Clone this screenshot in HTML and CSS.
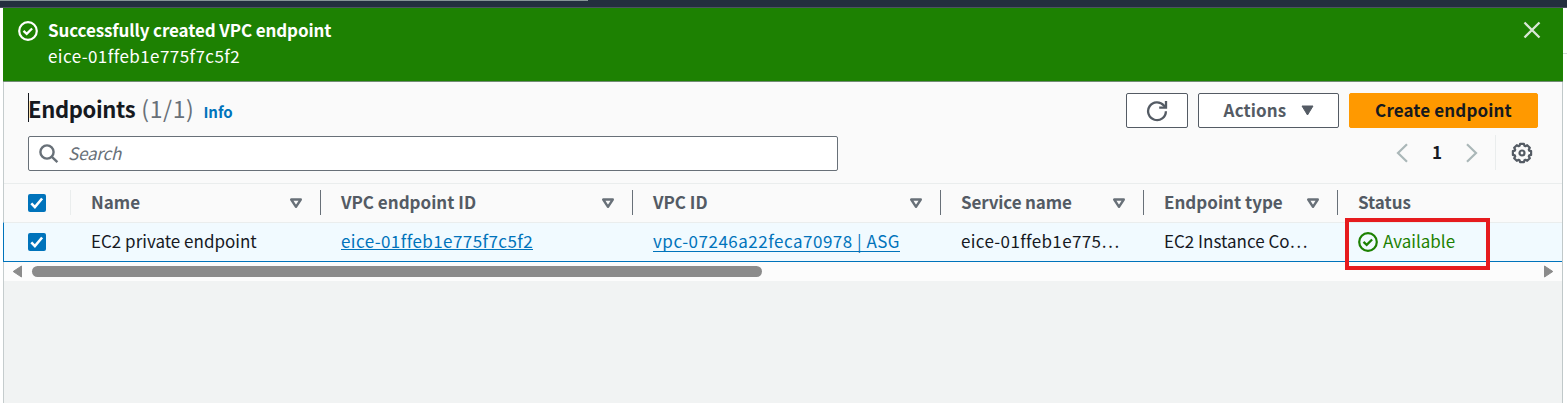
FILE: index.html
```html
<!DOCTYPE html>
<html lang="en">
<head>
<meta charset="utf-8">
<title>Endpoints</title>
<link rel="stylesheet" href="styles.css">
</head>
<body>
<svg class="defs" aria-hidden="true">
  <symbol id="sort" viewBox="0 0 14 12"><path d="M2.200 2.500h9.600L7 9.800z" fill="none" stroke="#687078" stroke-width="2.400" stroke-linejoin="round"/></symbol>
  <symbol id="ok" viewBox="0 0 20 20"><circle cx="10" cy="10" r="8.8" fill="none" stroke="currentColor" stroke-width="2.2"/><path d="M5.5 9.8l3.2 3 5.4-5.3" fill="none" stroke="currentColor" stroke-width="2.3"/></symbol>
  <symbol id="check" viewBox="0 0 18 18"><path d="M3.3 9.3l3.6 3.8 7.2-8.6" fill="none" stroke="#fff" stroke-width="2.6"/></symbol>
</svg>
<div class="topbar"><div class="topbar-edge"></div></div>
<div class="page">
  <main class="main">
    <section class="flash">
      <svg class="flash-icon" width="20" height="20"><use href="#ok"/></svg>
      <div class="flash-text">
        <div class="flash-title">Successfully created VPC endpoint</div>
        <div class="flash-body"><span class="resource-id">eice-01ffeb1e775f7c5f2</span></div>
      </div>
      <svg class="close" width="18" height="18" viewBox="0 0 18 18"><path d="M1.5 1.5l15 15M16.5 1.5l-15 15" stroke="#d9e7d5" stroke-width="2.3"/></svg>
    </section>
    <section class="panel">
      <div class="toolbar">
        <div class="heading">
          <h1 class="title">Endpoints</h1>
          <span class="count">(1/1)</span>
          <a class="info">Info</a>
        </div>
        <div class="actions">
          <button class="btn refresh"><svg width="22" height="22" viewBox="0 0 22 22" fill="none" stroke="#545b64" stroke-width="2.3"><path d="M19.9 11.2A8.9 8.9 0 1 1 17.9 5.6L19 7"/><path d="M20 1v6.7h-6.8"/></svg></button>
          <button class="btn menu"><span class="label">Actions</span><svg width="13" height="11" viewBox="0 0 13 11"><path d="M1 1h11L6.5 10z" fill="#545b64" stroke="#545b64" stroke-linejoin="round"/></svg></button>
          <button class="btn primary"><span class="label">Create endpoint</span></button>
        </div>
      </div>
      <div class="filters">
        <div class="search">
          <svg width="20" height="20" viewBox="0 0 20 20" fill="none" stroke="#687078" stroke-width="2.4"><circle cx="8" cy="8" r="6.6"/><path d="M12.6 12.6l5.8 5.6"/></svg>
          <span class="label">Search</span>
        </div>
        <div class="pager">
          <svg width="12" height="20" viewBox="0 0 12 20" fill="none" stroke="#aab7b8" stroke-width="2.2"><path d="M11 1.2L2 10l9 8.8"/></svg>
          <span class="page-no label">1</span>
          <svg width="12" height="20" viewBox="0 0 12 20" fill="none" stroke="#aab7b8" stroke-width="2.2"><path d="M1 1.2L10 10l-9 8.8"/></svg>
          <div class="prefs">
            <svg width="22" height="22" viewBox="0 0 22 22" fill="none" stroke="#545b64" stroke-width="2.2" stroke-linejoin="round"><path d="M9.1 1.9h3.8l.5 1.9 1 .4 1.8-1 2.6 2.6-1 1.8.4 1 1.9.5v3.8l-1.9.5-.4 1 1 1.8-2.6 2.6-1.8-1-1 .4-.5 1.9H9.1l-.5-1.9-1-.4-1.8 1-2.6-2.6 1-1.8-.4-1-1.9-.5V9.1l1.9-.5.4-1-1-1.8 2.6-2.6 1.8 1 1-.4z"/><circle cx="11" cy="11" r="2.5"/></svg>
          </div>
        </div>
      </div>
      <div class="grid head">
        <div class="cell pick light"><span class="box"><svg width="18" height="18"><use href="#check"/></svg></span></div>
        <div class="cell"><span class="label">Name</span><svg width="14" height="12"><use href="#sort"/></svg></div>
        <div class="cell"><span class="label">VPC endpoint ID</span><svg width="14" height="12"><use href="#sort"/></svg></div>
        <div class="cell"><span class="label">VPC ID</span><svg width="14" height="12"><use href="#sort"/></svg></div>
        <div class="cell"><span class="label tight">Service name</span><svg width="14" height="12"><use href="#sort"/></svg></div>
        <div class="cell"><span class="label">Endpoint type</span><svg width="14" height="12"><use href="#sort"/></svg></div>
        <div class="cell"><span class="label">Status</span></div>
      </div>
      <div class="grid row">
        <div class="cell pick"><span class="box"><svg width="18" height="18"><use href="#check"/></svg></span></div>
        <div class="cell"><span class="label">EC2 private endpoint</span></div>
        <div class="cell"><a class="link label resource-id">eice-01ffeb1e775f7c5f2</a></div>
        <div class="cell"><a class="link low label vpc-id">vpc-07246a22feca70978 | ASG</a></div>
        <div class="cell"><span class="label service">eice-01ffeb1e775…</span></div>
        <div class="cell"><span class="label">EC2 Instance Co…</span></div>
        <div class="cell status"><svg width="20" height="20"><use href="#ok"/></svg><span class="label">Available</span><div class="mark"></div></div>
      </div>
      <div class="scroll">
        <svg width="11" height="13" viewBox="0 0 11 13"><path d="M9.500 1v11L1.200 6.500z" fill="#8b8b8b" stroke="#8b8b8b" stroke-linejoin="round"/></svg>
        <div class="track"><div class="thumb"></div></div>
        <svg width="11" height="13" viewBox="0 0 11 13"><path d="M1.500 1v11l8.300-5.500z" fill="#8b8b8b" stroke="#8b8b8b" stroke-linejoin="round"/></svg>
      </div>
    </section>
  </main>
  <aside class="side"></aside>
</div>
</body>
</html>
```
FILE: styles.css
```css
* { box-sizing: border-box; }
body { margin: 0; width: 1567px; height: 403px; overflow: hidden; background: #fff; color: #16191f; font: 17px/24px "Noto Sans CJK JP", "Noto Sans", sans-serif; white-space: nowrap; }
svg { display: block; flex: none; }
.defs { position: absolute; width: 0; height: 0; }
.label { margin-bottom: 2px; }
.resource-id { letter-spacing: .43px; }
.vpc-id { letter-spacing: .5px; }
.service { letter-spacing: .35px; }
.tight { letter-spacing: -.15px; }
.topbar { height: 8px; background: #232f3e; border-bottom: 1px solid #4c5261; }
.topbar-edge { width: 588px; height: 1px; background: #879596; }
.page { display: flex; height: 395px; padding-left: 3px; }
.main { width: 1560px; height: 395px; display: flex; flex-direction: column; background: #f1f3f3; border-left: 1px solid #c5cccd; border-right: 1px solid #c0c8c9; }
.side { width: 4px; height: 46px; border-bottom: 1px solid #d5dbdb; }
.flash { height: 74px; margin: 0 -1px; padding: 9px 22px 0 15px; display: flex; background: #1d8102; color: #fff; border-bottom: 1px solid #718b74; }
.flash-icon { margin-top: 4px; }
.flash-text { margin-left: 10px; flex: 1; }
.flash-title { font-weight: 700; height: 27px; line-height: 25px; letter-spacing: -.11px; }
.flash-body { line-height: 24px; }
.close { margin-top: 4px; }
.panel { background: #fafafa; height: 199px; display: flex; flex-direction: column; }
.toolbar { height: 46px; display: flex; justify-content: space-between; padding: 11px 24px 0 24px; }
.heading { display: flex; align-items: baseline; height: 29px; border-left: 1px solid #16191f; }
.title { margin: 0 0 0 -1px; font-size: 22px; font-weight: 700; line-height: 31px; letter-spacing: -.35px; }
.count { margin-left: 6px; font-size: 23px; color: #687078; line-height: 31px; letter-spacing: .6px; }
.info { margin-left: 9px; font-size: 15px; font-weight: 700; color: #0073bb; }
.actions { display: flex; gap: 10px; }
.btn { height: 35px; padding: 0; display: flex; align-items: center; justify-content: center; font: inherit; font-weight: 700; color: #545b64; background: #fff; border: 1px solid #545b64; border-radius: 2px; }
.refresh { width: 62px; }
.menu { width: 141px; gap: 15px; padding-left: 1px; letter-spacing: .12px; }
.primary { width: 189px; background: #f90; border-color: #f90; color: #16191f; letter-spacing: .13px; }
.filters { height: 55px; display: flex; justify-content: space-between; padding: 8px 15px 0 24px; }
.search { width: 810px; height: 35px; display: flex; align-items: center; gap: 9px; padding-left: 10px; background: #fff; border: 1px solid #687078; border-radius: 2px; color: #687078; font-style: italic; letter-spacing: -.2px; }
.pager { display: flex; align-items: center; height: 33px; }
.page-no { width: 58px; text-align: center; font-weight: 700; }
.prefs { margin-left: 17px; border-left: 1px solid #eaeded; height: 35px; display: flex; align-items: center; padding: 0 14px 0 15px; }
.grid { display: grid; grid-template-columns: 67px 250px 312px 308px 203px 194px 1fr; height: 39px; border-top: 1px solid #eaeded; }
.cell { display: flex; align-items: center; justify-content: space-between; padding: 0 17px 0 20px; position: relative; }
.pick { padding-left: 24px; }
.box { width: 18px; height: 18px; background: #0073bb; border-radius: 2px; }
.head { font-weight: 700; color: #545b64; }
.head .cell { height: 25px; margin-top: 6px; border-right: 1px solid #687078; }
.head .light { border-right-color: #eaeded; }
.head .cell:last-child { border: 0; }
.row { height: 40px; margin-left: -1px; background: #f1faff; border-bottom: 1px solid #0073bb; border-left: 1px solid #0073bb; }
.link { color: #0073bb; line-height: 17px; border-bottom: 1px solid #0073bb; }
.low { line-height: 20px; padding-top: 1px; }
.status { justify-content: flex-start; gap: 5px; color: #1d8102; }
.mark { position: absolute; left: 7px; top: -5px; width: 145px; height: 52px; border: 4px solid #e61b1e; }
.scroll { height: 19px; flex: none; display: flex; align-items: center; justify-content: space-between; background: #fcfcfc; padding: 0 8px; }
.track { flex: 1; padding-left: 9px; }
.thumb { width: 730px; height: 11px; border-radius: 6px; background: #8b8b8b; }
```
